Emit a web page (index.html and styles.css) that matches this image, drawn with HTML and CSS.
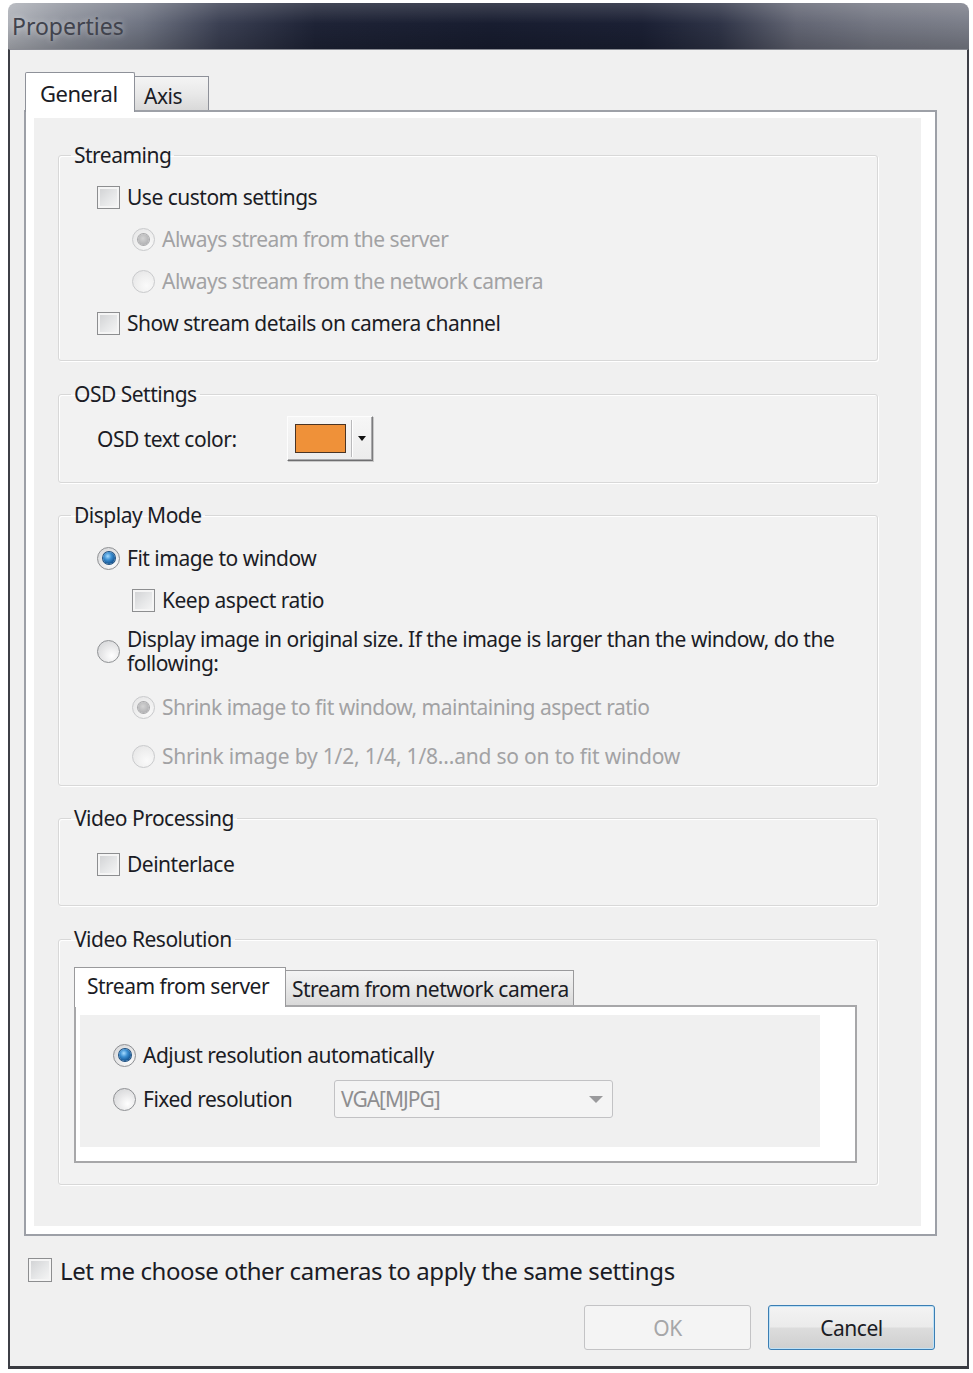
FILE: index.html
```html
<!DOCTYPE html>
<html>
<head>
<meta charset="utf-8">
<title>Properties</title>
<link rel="stylesheet" href="styles.css">
</head>
<body>
<div class="window">
  <div class="titlebar"><span class="title">Properties</span></div>
  <div class="client">
    <div class="tabstrip">
      <div class="tab tab-active tab-general">General</div>
      <div class="tab tab-axis">Axis</div>
    </div>
    <div class="tabpanel">
      <div class="page">

        <fieldset class="group">
          <legend>Streaming</legend>
          <div class="gbody gb-streaming">
            <div class="row"><span class="cb"></span><span class="lbl">Use custom settings</span></div>
            <div class="row indent disabled"><span class="rb rb-dis rb-dis-on"></span><span class="lbl">Always stream from the server</span></div>
            <div class="row indent disabled"><span class="rb rb-dis"></span><span class="lbl">Always stream from the network camera</span></div>
            <div class="row"><span class="cb"></span><span class="lbl">Show stream details on camera channel</span></div>
          </div>
        </fieldset>

        <fieldset class="group group-osd">
          <legend>OSD Settings</legend>
          <div class="gbody gb-osd">
            <div class="row row-osd">
              <span class="osd-label">OSD text color:</span>
              <span class="colorbtn"><span class="swatch"></span><span class="cb-sep"></span><span class="tri tri-dark"></span></span>
            </div>
          </div>
        </fieldset>

        <fieldset class="group">
          <legend>Display Mode</legend>
          <div class="gbody gb-display">
            <div class="row"><span class="rb rb-on"></span><span class="lbl">Fit image to window</span></div>
            <div class="row indent"><span class="cb"></span><span class="lbl">Keep aspect ratio</span></div>
            <div class="row row-multi"><span class="rb"></span><span class="lbl lbl-wrap">Display image in original size. If the image is larger than the window, do the following:</span></div>
            <div class="row indent disabled"><span class="rb rb-dis rb-dis-on"></span><span class="lbl">Shrink image to fit window, maintaining aspect ratio</span></div>
            <div class="row indent disabled row-last"><span class="rb rb-dis"></span><span class="lbl lbl-loose">Shrink image by 1/2, 1/4, 1/8...and so on to fit window</span></div>
          </div>
        </fieldset>

        <fieldset class="group">
          <legend>Video Processing</legend>
          <div class="gbody gb-vp">
            <div class="row"><span class="cb"></span><span class="lbl">Deinterlace</span></div>
          </div>
        </fieldset>

        <fieldset class="group group-vr">
          <legend>Video Resolution</legend>
          <div class="gbody gb-vr">
            <div class="subtabs">
              <div class="subtab subtab-active">Stream from server</div>
              <div class="subtab subtab-other">Stream from network camera</div>
            </div>
            <div class="subpanel">
              <div class="subpage">
                <div class="row"><span class="rb rb-on"></span><span class="lbl">Adjust resolution automatically</span></div>
                <div class="row row-fixed">
                  <span class="fixed-label"><span class="rb"></span><span class="lbl">Fixed resolution</span></span>
                  <span class="combo"><span class="combo-text">VGA[MJPG]</span><span class="tri tri-gray"></span></span>
                </div>
              </div>
            </div>
          </div>
        </fieldset>

      </div>
    </div>
    <div class="apply-row"><span class="cb cb-big"></span><span class="apply-lbl">Let me choose other cameras to apply the same settings</span></div>
    <div class="buttons">
      <button class="btn btn-ok" disabled>OK</button>
      <button class="btn btn-cancel">Cancel</button>
    </div>
  </div>
</div>
</body>
</html>
```

FILE: styles.css
```css
* { box-sizing: border-box; }
html, body { margin: 0; padding: 0; background: #ffffff; }
body {
  font-family: "Noto Sans", "Open Sans", "DejaVu Sans", sans-serif;
  font-size: 21px;
  letter-spacing: -0.5px;
  color: #1b1c25;
}

.window {
  margin: 3px 0 0 8px;
  width: 961px;
}

.titlebar {
  height: 46px;
  border-radius: 8px 8px 0 0;
  display: flex;
  align-items: center;
  padding-left: 4px;
  background:
    linear-gradient(180deg, rgba(255,255,255,0.16) 0%, rgba(255,255,255,0) 45%, rgba(0,0,0,0.18) 100%),
    linear-gradient(90deg, #aeb1b8 0%, #8e929c 6%, #6f7482 14%, #3b4053 22%, #1e2336 32%, #181d30 50%, #1b2034 66%, #2f3447 74%, #626573 82%, #737682 90%, #7b7e89 100%);
  background-color: #3a3e4e;
}
.title {
  font-size: 23px;
  letter-spacing: 0;
  color: #41434d;
  text-shadow: 0 0 6px rgba(255,255,255,0.5);
}

.client {
  background: #f0f0f0;
  border-left: 2px solid #3d3f46;
  border-right: 2px solid #3d3f46;
  border-top: 1px solid #8a8c94;
  border-bottom: 3px solid #393a40;
  padding: 22px 30px 16px 14px;
}

/* main tabs */
.tabstrip {
  display: flex;
  align-items: flex-end;
  padding-left: 1px;
  margin-bottom: -2px;
  position: relative;
  z-index: 1;
}
.tab {
  height: 34px;
  display: flex;
  align-items: center;
  border: 1px solid #8e9199;
  border-bottom: none;
  background: linear-gradient(180deg, #f4f4f4 0%, #e9e9e9 50%, #d9d9d9 100%);
  margin-bottom: 2px;
}
.tab-active {
  height: 40px;
  background: #ffffff;
  margin-bottom: 0;
  border-radius: 2px 2px 0 0;
}
.tab-general { width: 110px; padding-left: 14px; font-size: 22px; }
.tab-axis { width: 74px; padding-left: 9px; border-left: none; padding-top: 4px; }

.tabpanel {
  border: 2px solid #9da0a7;
  background: #ffffff;
  padding: 6px 14px 8px 8px;
}
.page {
  background: #f0f0f0;
  padding: 24px 43px 41px 24px;
  display: flex;
  flex-direction: column;
  gap: 19px;
}

/* group boxes */
.group {
  margin: 0;
  padding: 0;
  min-width: 0;
  width: 820px;
  border: 1px solid #d8d8d8;
  border-radius: 3px;
  box-shadow: 1px 1px 0 #ffffff, inset 1px 1px 0 #ffffff;
  background: #f2f2f2;
}
.group-osd { margin-top: 1px; }
.group-vr { margin-top: 1px; }
.group legend {
  margin-left: 12px;
  padding: 0 3px;
  line-height: 26px;
  height: 26px;
}
.gbody { padding-left: 38px; padding-right: 20px; }
.gb-streaming { padding-top: 8px; padding-bottom: 16px; }
.gb-osd { padding-top: 8px; padding-bottom: 21px; }
.gb-display { padding-top: 9px; padding-bottom: 8px; }
.gb-vp { padding-top: 12px; padding-bottom: 20px; }
.gb-vr { padding: 15px 20px 21px 15px; }

.row {
  display: flex;
  align-items: center;
  height: 42px;
  gap: 7px;
}
.row.indent { padding-left: 35px; }
.row.disabled { color: #a2a2a4; }
.row-multi {
  height: 65px;
  padding: 6px 0 11px;
  line-height: 24px;
}
.lbl-wrap { flex: 1; }
.lbl-loose { letter-spacing: -0.2px; }
.row-last { margin-top: 7px; }

/* checkbox */
.cb {
  flex: none;
  width: 23px;
  height: 23px;
  border: 1px solid #8d8e90;
  background: linear-gradient(135deg, #cfd0d2 0%, #e6e7e8 55%, #f7f7f7 100%);
  box-shadow: inset 0 0 0 2px #f5f5f5;
}
.cb-big { width: 24px; height: 24px; }

/* radio */
.rb {
  flex: none;
  width: 23px;
  height: 23px;
  border-radius: 50%;
  border: 1px solid #8f9194;
  background: radial-gradient(circle at 65% 70%, #ffffff 0%, #e9e9ea 45%, #cfd0d2 100%);
  display: flex;
  align-items: center;
  justify-content: center;
}
.rb-on::after {
  content: "";
  width: 12px;
  height: 12px;
  border-radius: 50%;
  background: radial-gradient(circle at 40% 35%, #a6dcff 0%, #3c8fd2 35%, #155897 70%, #0c3a6a 100%);
  box-shadow: 0 0 0 1px #1c4f80;
}
.rb-dis {
  border-color: #c9cacc;
  background: radial-gradient(circle at 65% 70%, #fafafa 0%, #efefef 50%, #e2e2e3 100%);
}
.rb-dis-on::after {
  content: "";
  width: 11px;
  height: 11px;
  border-radius: 50%;
  background: radial-gradient(circle at 45% 40%, #d4d4d4 0%, #b3b3b5 70%, #a5a5a7 100%);
  box-shadow: 0 0 0 1px #a8a8aa;
}

/* OSD */
.row-osd { height: 46px; gap: 0; }
.osd-label { width: 190px; padding-top: 2px; }
.colorbtn {
  width: 86px;
  height: 45px;
  display: flex;
  align-items: center;
  border: 1px solid;
  border-color: #fdfdfd #7c7c7e #6e6e70 #fdfdfd;
  box-shadow: inset -1px -1px 0 #a9a9ab, 1px 1px 0 #c9c9c9;
  background: linear-gradient(180deg, #f6f6f6, #ececec);
  padding-left: 7px;
}
.swatch {
  width: 51px;
  height: 29px;
  border: 1px solid #4a3424;
  background: #ef9139;
}
.cb-sep {
  width: 2px;
  height: 37px;
  margin-left: 5px;
  border-left: 1px solid #b9b9bb;
  border-right: 1px solid #ffffff;
}
.tri {
  width: 0;
  height: 0;
  border-left: 4px solid transparent;
  border-right: 4px solid transparent;
}
.tri-dark { border-top: 5px solid #111; margin-left: 5px; }
.tri-gray { border-left-width: 7px; border-right-width: 7px; border-top: 7px solid #9a9a9c; }

/* inner tabs */
.subtabs {
  display: flex;
  align-items: flex-end;
  margin-bottom: -2px;
  position: relative;
  z-index: 1;
}
.subtab {
  display: flex;
  align-items: center;
  border: 1px solid #9a9a9c;
  border-bottom: none;
}
.subtab-active {
  width: 212px;
  height: 40px;
  padding-left: 12px;
  padding-bottom: 3px;
  background: #ffffff;
}
.subtab-other {
  width: 288px;
  height: 35px;
  padding-left: 6px;
  padding-top: 2px;
  margin-bottom: 2px;
  border-left: none;
  background: linear-gradient(180deg, #f4f4f4 0%, #e8e8e8 50%, #d9d9d9 100%);
}
.subpanel {
  width: 783px;
  border: 2px solid #a7a7a9;
  background: #ffffff;
  padding: 8px 35px 14px 4px;
}
.subpage {
  background: #f0f0f0;
  height: 132px;
  padding: 19px 0 0 33px;
}
.row-fixed { height: 46px; gap: 0; }
.fixed-label { display: flex; align-items: center; gap: 7px; width: 221px; }
.combo {
  width: 279px;
  height: 38px;
  display: flex;
  align-items: center;
  justify-content: space-between;
  border: 1px solid #c2c2c4;
  border-radius: 3px;
  background: #f4f4f4;
  padding: 0 9px 0 6px;
  color: #8e8e90;
}
.combo-text { letter-spacing: -1px; }

/* bottom */
.apply-row {
  display: flex;
  align-items: center;
  gap: 8px;
  margin-top: 22px;
  padding-left: 4px;
  height: 24px;
}
.apply-lbl { font-size: 24px; letter-spacing: -0.4px; }
.buttons {
  display: flex;
  justify-content: flex-end;
  gap: 17px;
  margin-top: 23px;
  padding-right: 2px;
}
.btn {
  width: 167px;
  height: 45px;
  border-radius: 3px;
  font-family: inherit;
  font-size: 21px;
  letter-spacing: -0.5px;
  padding: 0;
}
.btn-ok {
  border: 1px solid #c3c3c5;
  background: #f4f4f4;
  color: #a6a6a8;
}
.btn-cancel {
  border: 1px solid #3b7eb3;
  background: linear-gradient(180deg, #f3f3f3 0%, #ebebeb 48%, #dcdcdc 52%, #cfcfcf 100%);
  box-shadow: inset 0 0 0 1px #bfe1f6;
  color: #1b1c25;
}
```
